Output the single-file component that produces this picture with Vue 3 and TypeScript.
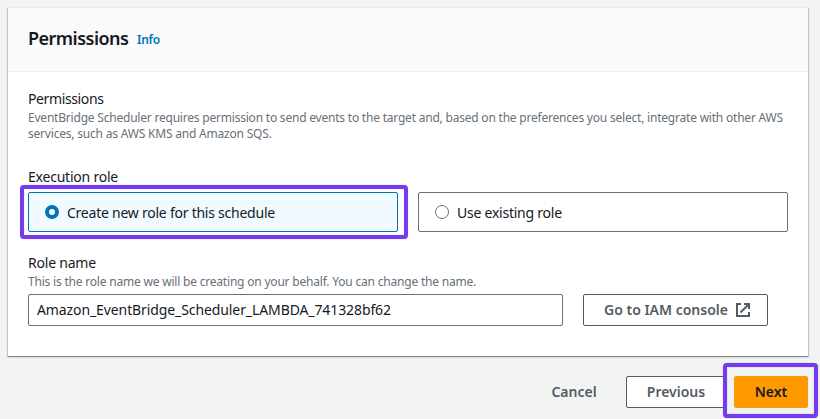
<script setup lang="ts">
import { ref } from 'vue'

const roleMode = ref<'new' | 'existing'>('new')
const roleName = ref<string>('Amazon_EventBridge_Scheduler_LAMBDA_741328bf62')
const options: { id: 'new' | 'existing'; label: string }[] = [
  { id: 'new', label: 'Create new role for this schedule' },
  { id: 'existing', label: 'Use existing role' },
]
</script>

<template>
  <main class="page">
    <section class="card">
      <header class="card-header">
        <h2>Permissions</h2>
        <a class="info">Info</a>
      </header>
      <div class="card-body">
        <div class="label perm-label">Permissions</div>
        <p class="hint perm-hint">
          <span class="line first">EventBridge Scheduler requires permission to send events to the target and, based on the preferences you select, integrate with other AWS</span>
          <span class="line second">services, such as AWS KMS and Amazon SQS.</span>
        </p>
        <div class="label exec-label">Execution role</div>
        <div class="tiles">
          <div
            v-for="option in options"
            :key="option.id"
            class="tile"
            :class="[option.id, { selected: roleMode === option.id }]"
            @click="roleMode = option.id"
          >
            <span class="radio"></span>
            <span class="tile-label">{{ option.label }}</span>
            <span v-if="option.id === 'new'" class="highlight"></span>
          </div>
        </div>
        <div class="label role-label">Role name</div>
        <p class="hint role-hint">This is the role name we will be creating on your behalf. You can change the name.</p>
        <div class="role-row">
          <div class="input"><span class="value">{{ roleName }}</span></div>
          <button class="btn iam">
            <span>Go to IAM console</span>
            <svg width="16" height="16" viewBox="0 0 16 16" fill="none" stroke="currentColor" stroke-width="2">
              <path d="M6 2H2v12h12v-4" />
              <path d="M9 2h5v5" />
              <path d="M5.5 10.5L14 2" />
            </svg>
          </button>
        </div>
      </div>
    </section>
    <footer class="actions">
      <button class="btn cancel"><span>Cancel</span></button>
      <button class="btn previous"><span>Previous</span></button>
      <div class="next-wrap">
        <button class="btn next"><span>Next</span></button>
        <span class="highlight"></span>
      </div>
    </footer>
  </main>
</template>

<style>
body {
  background: #f2f3f3;
  overflow: hidden;
}
</style>

<style scoped>
.page {
  box-sizing: border-box;
  width: 820px;
  height: 419px;
  padding: 7px 12px 0 8px;
  background: #f2f3f3;
  color: #16191f;
  font-family: "Noto Sans", "Open Sans", sans-serif;
  font-size: 14px;
  overflow: hidden;
  white-space: nowrap;
}
.card {
  box-sizing: border-box;
  height: 349px;
  background: #fff;
  box-shadow: 0 1px 1px 0 rgba(0, 28, 36, 0.3), 1px 1px 1px 0 rgba(0, 28, 36, 0.15), -1px 1px 1px 0 rgba(0, 28, 36, 0.15);
  border-top: 1px solid #eaeded;
}
.card-header {
  box-sizing: border-box;
  height: 64px;
  padding: 17px 20px 0;
  display: flex;
  gap: 8px;
  background: #fafafa;
  border-bottom: 1px solid #eaeded;
}
h2 {
  width: 101px;
  margin: 0;
  font-size: 18px;
  line-height: 26px;
  font-weight: 600;
  letter-spacing: -0.52px;
}
.info {
  color: #0073bb;
  font-size: 12px;
  font-weight: 600;
  line-height: 30px;
  letter-spacing: -0.25px;
}
.card-body {
  padding: 16px 20px 0;
}
.label {
  line-height: 22px;
  letter-spacing: -0.22px;
}
.perm-label {
  letter-spacing: -0.38px;
}
.hint {
  margin: 0;
  color: #687078;
  font-size: 12px;
  line-height: 16px;
  letter-spacing: -0.2px;
}
.perm-hint {
  height: 32px;
}
.line {
  display: block;
}
.first {
  letter-spacing: -0.21px;
}
.exec-label {
  margin-top: 24px;
}
.tiles {
  display: grid;
  grid-template-columns: 370px 370px;
  gap: 20px;
  margin-top: 4px;
}
.tile {
  position: relative;
  box-sizing: border-box;
  height: 40px;
  padding-left: 16px;
  display: flex;
  align-items: center;
  gap: 8px;
  border: 1px solid #687078;
  border-radius: 2px;
}
.tile.selected {
  border-color: #0073bb;
  background: #f1faff;
}
.tile-label {
  letter-spacing: -0.24px;
}
.radio {
  box-sizing: border-box;
  width: 14px;
  height: 14px;
  border: 1px solid #687078;
  border-radius: 50%;
  background: #fff;
}
.selected .radio {
  border: 4px solid #0073bb;
}
.highlight {
  position: absolute;
  box-sizing: border-box;
  inset: -8px -11px -8px -9px;
  border: 4px solid #753bee;
  border-radius: 4px;
  box-shadow: 0 0 1px rgba(80, 60, 130, 0.6), inset 0 0 1px rgba(80, 60, 130, 0.6);
  pointer-events: none;
}
.role-label {
  margin-top: 20px;
}
.role-row {
  display: flex;
  gap: 20px;
  margin-top: 4px;
}
.input {
  box-sizing: border-box;
  width: 535px;
  height: 32px;
  padding-left: 8px;
  border: 1px solid #687078;
  border-radius: 2px;
  line-height: 30px;
  letter-spacing: -0.1px;
}
.btn {
  box-sizing: border-box;
  height: 32px;
  padding: 0 20px;
  display: flex;
  align-items: center;
  justify-content: center;
  border: 1px solid #545b64;
  border-radius: 2px;
  background: #fff;
  color: #545b64;
  font: 600 14px "Noto Sans", "Open Sans", sans-serif;
  letter-spacing: 0;
}
.btn span {
  padding-bottom: 1px;
}
.iam {
  width: 185px;
  padding: 0 16px 0 20px;
  justify-content: space-between;
}
.iam svg {
  flex: none;
}
.actions {
  display: flex;
  justify-content: flex-end;
  margin-top: 20px;
}
.cancel {
  width: 84px;
  margin-right: 10px;
  border-color: transparent;
  background: transparent;
}
.previous {
  width: 100px;
  margin-right: -2px;
}
.next-wrap {
  position: relative;
  margin-left: 10px;
}
.next {
  width: 74px;
  border-color: #ff9900;
  background: #ff9900;
  color: #16191f;
}
.next-wrap .highlight {
  inset: -13px -10px -10px -11px;
}
</style>
